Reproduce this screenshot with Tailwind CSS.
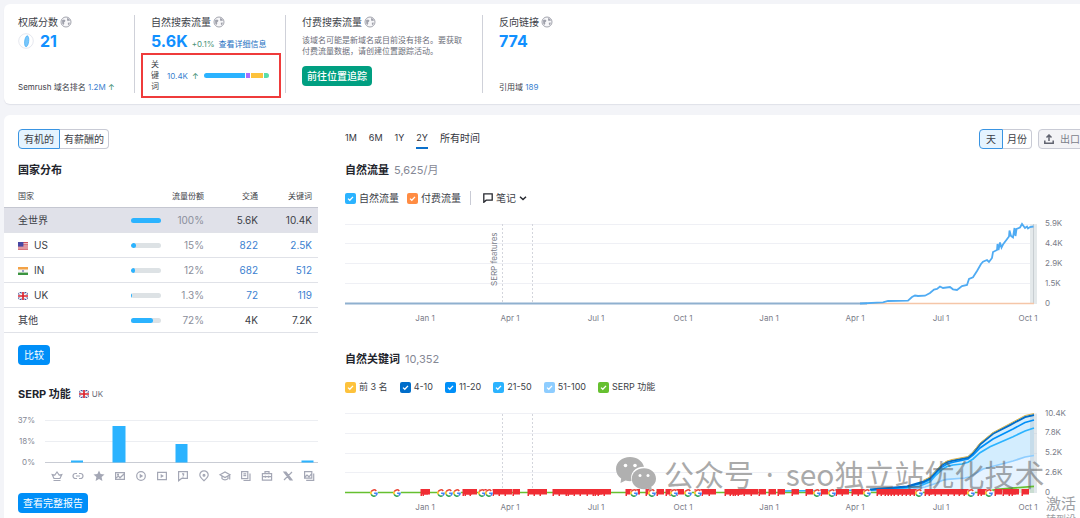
<!DOCTYPE html>
<html lang="zh-CN">
<head>
<meta charset="utf-8">
<title>Semrush 域名概览</title>
<script src="https://cdn.jsdelivr.net/npm/@tailwindcss/browser@4"></script>
</head>
<body class="relative min-h-screen overflow-hidden bg-[#f3f4f8] pt-1 pl-1 font-['Inter','Noto_Sans_CJK_SC',sans-serif] text-[10px] text-[#3c3e47]">

<svg class="hidden">
  <symbol id="globe" viewBox="0 0 12 12"><circle cx="6" cy="6" r="5" fill="#f7f7f9" stroke="#a3a5ae" stroke-width="1"/><path d="M2 4.200 4 3.400l1.400.8-.3 1.200L4 6.400 4.300 7.600 3.500 9 2.300 7.800zM7 2 9.200 3l.9 2-1.200-.4L8 5.200l-.9-.9zM7.800 6.800l2-.4-.5 2.200-1.300.5z" fill="#9fa1ab"/></symbol>
  <symbol id="check" viewBox="0 0 11 11"><path d="M3 5.600 4.800 7.300 8 3.900" fill="none" stroke="#fff" stroke-width="1.300"/></symbol>
  <symbol id="us" viewBox="0 0 10 8"><path fill="#f3dfe2" d="M0 0h10v8H0z"/><path d="M0 .6h10M0 2.800h10M0 5h10M0 7.200h10" stroke="#d0515c" stroke-width="1.200"/><path fill="#4747a3" d="M0 0h5.400v4.600H0z"/></symbol>
  <symbol id="in" viewBox="0 0 10 8"><path fill="#f5f5f3" d="M0 0h10v8H0z"/><path fill="#f3a246" d="M0 0h10v2.500H0z"/><path fill="#3a9440" d="M0 5.600h10V8H0z"/><circle cx="5" cy="4" r="1" fill="#8184bd"/></symbol>
  <symbol id="uk" viewBox="0 0 10 8"><path fill="#3b4596" d="M0 0h10v8H0z"/><path d="M0 0 10 8M10 0 0 8" stroke="#eee" stroke-width="1.500"/><path d="M5 0v8M0 4h10" stroke="#fff" stroke-width="3"/><path d="M5 0v8M0 4h10" stroke="#d9232e" stroke-width="1.700"/></symbol>
  <symbol id="goog" viewBox="0 0 8 8"><circle cx="4" cy="4" r="4" fill="#fff"/><g fill="none" stroke-width="1.500"><path d="M1.200 2.600A3.100 3.100 0 0 1 6.300 1.900" stroke="#ea4335"/><path d="M1.200 2.600A3.100 3.100 0 0 0 1.200 5.400" stroke="#fbbc05"/><path d="M1.200 5.400A3.100 3.100 0 0 0 5.600 6.700" stroke="#34a853"/><path d="M5.600 6.700A3.100 3.100 0 0 0 7.100 4.200H4.100" stroke="#4285f4"/></g></symbol>
  <symbol id="flag" viewBox="0 0 9 9"><path d="M.5 1h7.500v5.500H2v1.500H.5z" fill="#f02d34"/></symbol>
</svg>

<header class="flex rounded-l-md bg-white py-[11px] pl-[14px] shadow-[0_1px_1px_#dfe1e8]">
  <section class="flex h-[78px] w-[117px] shrink-0 flex-col border-r border-[#cfd1d9]">
    <h2 class="flex items-center gap-[2px] leading-[14px]">权威分数 <svg class="size-3"><use href="#globe"/></svg></h2>
    <p class="flex items-center gap-[6px] text-base leading-6 font-bold text-[#1190ff]"><svg class="size-4" viewBox="0 0 16 16"><circle cx="8" cy="8" r="7.300" fill="#fff" stroke="#e6e8ef"/><ellipse cx="8.700" cy="8.200" rx="2" ry="5.500" transform="rotate(7 8 8)" fill="#79c7fb" stroke="#46aff5" stroke-width=".7"/></svg>21</p>
    <p class="mt-auto text-[8px] leading-3">Semrush 域名排名 <a href="#" class="text-[#3b7fd0]">1.2M</a> <span class="text-[#3d8d70]">↑</span></p>
  </section>
  <section class="flex h-[78px] w-[151px] shrink-0 flex-col border-r border-[#cfd1d9] pl-4">
    <h2 class="flex items-center gap-[2px] leading-[14px]">自然搜索流量 <svg class="size-3"><use href="#globe"/></svg></h2>
    <p class="flex items-baseline gap-1 text-[8px]"><b class="text-base leading-6 text-[#1190ff]">5.6K</b><span class="text-[#4b9478]">+0.1%</span><a href="#" class="text-[#1b6fc2]">查看详细信息</a></p>
    <div class="-ml-[10px] flex h-[45px] w-[140px] shrink-0 items-center border-2 border-[#ef3b3b] pl-2 text-[8px]">
      <span class="w-4 pr-2 leading-[11px]">关键词</span>
      <a href="#" class="text-[#3b7fd0]">10.4K</a><span class="ml-1 text-[#3d8d70]">↑</span>
      <span class="ml-[5px] flex h-[5px] w-[65px] gap-px overflow-hidden rounded-full"><i class="flex-1 bg-[#2bb3ff]"></i><i class="w-1 bg-[#ab6cfe]"></i><i class="w-3 bg-[#fdc23c]"></i><i class="w-[5px] bg-[#59ddaa]"></i></span>
    </div>
  </section>
  <section class="h-[78px] w-[197px] shrink-0 border-r border-[#cfd1d9] pl-4">
    <h2 class="flex items-center gap-[2px] leading-[14px]">付费搜索流量 <svg class="size-3"><use href="#globe"/></svg></h2>
    <p class="mt-[6px] w-[166px] text-[8px] leading-[11px] text-[#6c6e79]">该域名可能是新域名或目前没有排名。要获取付费流量数据，请创建位置跟踪活动。</p>
    <button class="mt-[9px] h-5 rounded bg-[#009f81] px-[5px] text-[10px] leading-5 font-medium text-white">前往位置追踪</button>
  </section>
  <section class="flex h-[78px] flex-col pl-4">
    <h2 class="flex items-center gap-[2px] leading-[14px]">反向链接 <svg class="size-3"><use href="#globe"/></svg></h2>
    <p class="text-base leading-6 font-bold text-[#1190ff]">774</p>
    <p class="mt-auto text-[8px] leading-3">引用域 <a href="#" class="text-[#3b7fd0]">189</a></p>
  </section>
</header>

<main class="mt-[11px] flex rounded-tl-md bg-white pt-[14px]">
  <aside class="w-[314px] shrink-0">
    <div class="ml-[14px] flex h-5 leading-[18px]">
      <button class="rounded-l border border-[#3994e2] bg-[#e5f4ff] px-[5px]">有机的</button><button class="rounded-r border border-l-0 border-[#c9cbd5] px-1">有薪酬的</button>
    </div>
    <h2 class="mt-3 ml-[14px] text-[11px] leading-[18px] font-bold text-[#22242c]">国家分布</h2>
    <table class="mt-[6px] w-full table-fixed border-separate border-spacing-0 text-right text-[10px] [&_td]:border-b [&_td]:border-[#e0e2e8] [&_td]:p-0 [&_td:last-child]:pr-[6px] [&_td:first-child]:pl-[14px] [&_td:first-child]:text-left">
      <colgroup><col class="w-[127px]"><col class="w-[30px]"><col class="w-[43px]"><col class="w-[54px]"><col class="w-[60px]"></colgroup>
      <thead><tr class="h-[23px] text-[8px] [&_th]:border-b [&_th]:border-[#c5c7d1] [&_th]:p-0 [&_th]:font-normal"><th class="text-left"><span class="ml-[14px]">国家</span></th><th colspan="2">流量份额</th><th>交通</th><th><span class="mr-[6px]">关键词</span></th></tr></thead>
      <tbody>
        <tr class="h-[25px] bg-[#e0e1e9]"><td>全世界</td><td><div class="h-[5px] rounded-full bg-[#2bb3ff]"></div></td><td class="text-[#8a8e9b]">100%</td><td>5.6K</td><td>10.4K</td></tr>
        <tr class="h-[25px]"><td><svg class="mr-[6px] inline h-2 w-[10px]"><use href="#us"/></svg>US</td><td><div class="h-[5px] overflow-hidden rounded-full bg-[#dde2e5]"><div class="h-full rounded-full bg-[#2bb3ff]" style="width:15%"></div></div></td><td class="text-[#8a8e9b]">15%</td><td><a href="#" class="text-[#3b7fd0]">822</a></td><td><a href="#" class="text-[#3b7fd0]">2.5K</a></td></tr>
        <tr class="h-[25px] [&_td]:border-[#cdd2da]"><td><svg class="mr-[6px] inline h-2 w-[10px]"><use href="#in"/></svg>IN</td><td><div class="h-[5px] overflow-hidden rounded-full bg-[#dde2e5]"><div class="h-full rounded-full bg-[#2bb3ff]" style="width:12%"></div></div></td><td class="text-[#8a8e9b]">12%</td><td><a href="#" class="text-[#3b7fd0]">682</a></td><td><a href="#" class="text-[#3b7fd0]">512</a></td></tr>
        <tr class="h-[25px]"><td><svg class="mr-[6px] inline h-2 w-[10px]"><use href="#uk"/></svg>UK</td><td><div class="h-[5px] overflow-hidden rounded-full bg-[#dde2e5]"><div class="h-full bg-[#2bb3ff]" style="width:3%"></div></div></td><td class="text-[#8a8e9b]">1.3%</td><td><a href="#" class="text-[#3b7fd0]">72</a></td><td><a href="#" class="text-[#3b7fd0]">119</a></td></tr>
        <tr class="h-[25px]"><td>其他</td><td><div class="h-[5px] overflow-hidden rounded-full bg-[#dde2e5]"><div class="h-full rounded-r-full bg-[#2bb3ff]" style="width:72%"></div></div></td><td class="text-[#8a8e9b]">72%</td><td>4K</td><td>7.2K</td></tr>
      </tbody>
    </table>
    <div class="pl-[14px]">
      <button class="mt-3 block h-5 rounded bg-[#008ff8] px-[6px] leading-5 text-white">比较</button>
      <h2 class="mt-5 flex items-center gap-2 text-[11px] leading-[18px] font-bold text-[#22242c]">SERP 功能 <span class="flex items-center gap-[3px] text-[8px] font-normal text-[#6c6e79]"><svg class="h-2 w-[10px]"><use href="#uk"/></svg>UK</span></h2>
      <svg class="mt-2 block w-full" viewBox="18 411 300 74">
        <path d="M45 420.500H318M45 441.500H318" stroke="#eceef2"/><path d="M45 462.500H318" stroke="#c9ccd4"/>
        <path d="M71 460.500h12v2H71zM112.500 426h13v36.500h-13zM175.500 444h12v18.500h-12zM301.500 460.500h12v2h-12z" fill="#2bb3ff"/>
        <g font-size="8" fill="#858895" text-anchor="end"><text x="35" y="423">37%</text><text x="35" y="444">18%</text><text x="35" y="465">0%</text></g>
        <g fill="none" stroke="#a4a7b5" stroke-width="1.200">
          <g transform="translate(57 476)"><path d="M-3 2.500-4.800-1.500-2.200-1 0-4 2.200-1l2.600-.5L3 2.500zM-3.500 4.500h7"/></g>
          <g transform="translate(78 476)"><path d="M-1-2.500h-1.500a2.500 2.500 0 0 0 0 5H-1M1-2.500h1.500a2.500 2.500 0 0 1 0 5H1M-2 0h4"/></g>
          <g transform="translate(99 476)"><path fill="#a4a7b5" stroke="none" d="m0-5.500 1.600 3.600 3.900.4-2.900 2.600.8 3.900L0 3l-3.400 2 .8-3.900-2.900-2.600 3.900-.4z"/></g>
          <g transform="translate(120 476)"><path d="M-4.400-3.400h8.800v6.800h-8.800zM-4 2l2.500-2L0 1.800 4-2"/><circle cx="-2" cy="-1.300" r=".5"/></g>
          <g transform="translate(141 476)"><circle r="4.300"/><path fill="#a4a7b5" stroke="none" d="m-1.300-2.200 3.500 2.200-3.500 2.200z"/></g>
          <g transform="translate(162 476)"><path d="M-4.400-3.600h8.800v7.200h-8.800z"/><path fill="#a4a7b5" stroke="none" d="m-1.300-2 3.200 2-3.200 2z"/></g>
          <g transform="translate(183 476)"><path d="M-4.400-4.400h8.800v6.800h-5.800l-3 2.300zM-1-2.200h1.600v1.200L0-.3M0 .5v1"/></g>
          <g transform="translate(204 476)"><path d="M0 4.800C-2.500 2.500-4.200.8-4.200-1a4.200 4.200 0 0 1 8.400 0C4.200.8 2.500 2.500 0 4.800z"/><circle cy="-.8" r=".9" fill="#a4a7b5"/></g>
          <g transform="translate(225 476)"><path d="M-5-1.200 0-4l5 2.800L0 1.600zM-3 0v2.700C-1.500 4.300 1.500 4.300 3 2.700V0M4.700-1v4.500"/></g>
          <g transform="translate(246 476)"><path d="M-4.400-4.400h6.200v7h-6.200zM4-2.500v7h-6.500M-2.600-2.200H.2M-2.600-.3H.2"/></g>
          <g transform="translate(267 476)"><path d="M-4.600-2.300h9.200v6.400h-9.200zM-2-2.400v-2h4v2M-4.600.7h9.200M-1.600-.3v2M1.600-.3v2"/></g>
          <g transform="translate(288 476)"><path d="M-4-4h2L4 4H2zM4-4-4 4M-3-4l6 8"/></g>
          <g transform="translate(309 476)"><path d="M-4.400-4.400h7.200v6.600h-7.200zM4.700-2.500v6.800h-7.500M-4 1l2-2L0 .8l2.500-3"/></g>
        </g>
      </svg>
      <button class="mt-2 block h-5 rounded bg-[#008ff8] px-[5px] leading-5 text-white">查看完整报告</button>
    </div>
  </aside>

  <div class="ml-[27px] min-w-0 flex-1">
    <div class="flex h-5 items-start">
      <nav class="flex gap-3 text-[9px] leading-[18px] text-[#33353d]"><a href="#">1M</a><a href="#">6M</a><a href="#">1Y</a><a href="#" class="border-b-2 border-[#0b70cb]">2Y</a><a href="#" class="text-[10px]">所有时间</a></nav>
      <div class="-mr-[6px] ml-auto flex h-5 leading-[18px]">
        <button class="rounded-l border border-[#3994e2] bg-[#e5f4ff] px-[6px]">天</button><button class="rounded-r border border-l-0 border-[#c9cbd5] px-1">月份</button>
        <button class="ml-[6px] flex items-center gap-[6px] rounded border border-[#c9cbd5] bg-[#f3f3f6] px-[5px] text-[#7b7e8a]"><svg class="size-[10px]" viewBox="0 0 10 10" fill="none" stroke="#60636f" stroke-width="1.500"><path d="M.8 6.500v2.800h8.400V6.500M5 7V1M2.500 3.500 5 1l2.500 2.500"/></svg>出口</button>
      </div>
    </div>
    <h2 class="mt-3 flex gap-[5px] text-[11px] leading-[18px] font-bold text-[#22242c]">自然流量 <span class="font-normal text-[#858895]">5,625/月</span></h2>
    <div class="mt-[10px] flex h-[18px] items-center">
      <label class="flex items-center gap-[3px]"><span class="grid"><input type="checkbox" checked class="size-[11px] appearance-none rounded-xs bg-[#2bb3ff] [grid-area:1/1]"><svg class="pointer-events-none size-[11px] [grid-area:1/1]"><use href="#check"/></svg></span>自然流量</label>
      <label class="ml-2 flex items-center gap-[3px]"><span class="grid"><input type="checkbox" checked class="size-[11px] appearance-none rounded-xs bg-[#ff8c43] [grid-area:1/1]"><svg class="pointer-events-none size-[11px] [grid-area:1/1]"><use href="#check"/></svg></span>付费流量</label>
      <span class="ml-[9px] h-[14px] w-px bg-[#c9cbd5]"></span>
      <button class="ml-3 flex items-center gap-[3px]"><svg class="size-[10px]" viewBox="0 0 10 10" fill="none" stroke="#26282f" stroke-width="1.300"><path d="M.8.8h8.400v6.400H3.200L.8 9.300z"/></svg>笔记<svg class="size-2" viewBox="0 0 8 8" fill="none" stroke="#26282f" stroke-width="1.500"><path d="m1 2.800 3 2.700 3-2.700"/></svg></button>
    </div>
    <svg class="mt-2 block w-full" viewBox="345 215 735 110">
      <path d="M345 224.500H1037M345 243.500H1037M345 263.500H1037M345 283.500H1037" stroke="#eff0f5"/>
      <path d="M502.500 224v79M532.500 224v79" stroke="#d3d5dc" stroke-dasharray="2 2"/>
      <path d="M1030 224h7v80h-7z" fill="#e4e9eb"/><path d="M1033.500 224v80" stroke="#c8ced2"/>
      <path d="M345 303.500H867" stroke="#8fb0cf" stroke-width="2"/><path d="M860 303.500H1034" stroke="#f5c6a8" stroke-width="1.400"/>
      <path d="M860 303.500 883 302.300 888 301 908 300.700 912 297 915 295.500 918 296 925 295.700 930 293 934 289.500 937 289 940 286.500 943 288 950 287 953 289.300 957 290 962 286 967 285 969 279 973 277.300 977 271 981 264 983 261.700 987 260 989 262 992 258 993 252 997 250 997.500 244 998.500 250 1000 242.500 1001.500 247.500 1003 244.500 1009 236.500 1009.500 230.500 1011 236 1013 237.500 1014.500 228 1015.500 236 1016.500 229 1020 227.500 1022 224 1025 228 1027 226.500 1028 228.500 1030 227 1033.500 226.500" fill="none" stroke="#4fabf3" stroke-width="1.800"/>
      <g font-size="8" fill="#7a7d89"><text x="1045" y="226">5.9K</text><text x="1045" y="246">4.4K</text><text x="1045" y="266">2.9K</text><text x="1045" y="286">1.5K</text><text x="1045" y="306">0</text>
      <text transform="translate(497 286) rotate(-90)">SERP features</text>
      <g text-anchor="middle"><text x="425" y="321">Jan 1</text><text x="510" y="321">Apr 1</text><text x="596" y="321">Jul 1</text><text x="683" y="321">Oct 1</text><text x="769" y="321">Jan 1</text><text x="855" y="321">Apr 1</text><text x="941" y="321">Jul 1</text><text x="1028" y="321">Oct 1</text></g></g>
    </svg>
    <h2 class="mt-[25px] flex gap-[5px] text-[11px] leading-[18px] font-bold text-[#22242c]">自然关键词 <span class="font-normal text-[#858895]">10,352</span></h2>
    <div class="mt-[10px] flex h-[18px] items-center gap-3 text-[9px]">
      <label class="flex items-center gap-[3px]"><span class="grid"><input type="checkbox" checked class="size-[11px] appearance-none rounded-xs bg-[#fdc23c] [grid-area:1/1]"><svg class="pointer-events-none size-[11px] [grid-area:1/1]"><use href="#check"/></svg></span>前 3 名</label>
      <label class="flex items-center gap-[3px]"><span class="grid"><input type="checkbox" checked class="size-[11px] appearance-none rounded-xs bg-[#006dca] [grid-area:1/1]"><svg class="pointer-events-none size-[11px] [grid-area:1/1]"><use href="#check"/></svg></span>4-10</label>
      <label class="flex items-center gap-[3px]"><span class="grid"><input type="checkbox" checked class="size-[11px] appearance-none rounded-xs bg-[#008ff8] [grid-area:1/1]"><svg class="pointer-events-none size-[11px] [grid-area:1/1]"><use href="#check"/></svg></span>11-20</label>
      <label class="flex items-center gap-[3px]"><span class="grid"><input type="checkbox" checked class="size-[11px] appearance-none rounded-xs bg-[#2bb3ff] [grid-area:1/1]"><svg class="pointer-events-none size-[11px] [grid-area:1/1]"><use href="#check"/></svg></span>21-50</label>
      <label class="flex items-center gap-[3px]"><span class="grid"><input type="checkbox" checked class="size-[11px] appearance-none rounded-xs bg-[#8ecdff] [grid-area:1/1]"><svg class="pointer-events-none size-[11px] [grid-area:1/1]"><use href="#check"/></svg></span>51-100</label>
      <label class="flex items-center gap-[3px]"><span class="grid"><input type="checkbox" checked class="size-[11px] appearance-none rounded-xs bg-[#66c030] [grid-area:1/1]"><svg class="pointer-events-none size-[11px] [grid-area:1/1]"><use href="#check"/></svg></span>SERP 功能</label>
    </div>
    <svg class="mt-2 block w-full" viewBox="345 404 735 114">
      <path d="M345 413.500H1037M345 433.500H1037M345 453.500H1037M345 472.500H1037" stroke="#eff0f5"/>
      <path d="M502.500 414v78M532.500 414v78" stroke="#d3d5dc" stroke-dasharray="2 2"/>
      <path d="M780 491.500 870 489 907 486 923 481 930 477.500 936 471 942 464.500 947 461.500 952 460 968 456.500 973 452 980 443.500 993 432.700 1010 424 1025 415.700 1034 413.500V493H780z" fill="#d3edfe"/>
      <path d="M860 492 913 489 937 483 947 479.300 970 476.700 983 469 1013 461 1034 455.700V493H860z" fill="#e6f3ff"/>
      <path d="M980 492 997 489.300 1034 486.300V493z" fill="#d9efd5"/>
      <path d="M1030 414h7v79h-7z" fill="#b4c4cc" fill-opacity=".4"/>
      <g fill="none" stroke-width="1.700">
        <path d="M860 491 913 489 925 487 937 483 942 480.500 947 479.300 965 478 970 476.700 983 469 1013 461 1025 457 1034 455.500" stroke="#8ecdff"/>
        <path d="M345 492.500H980L997 489.300 1034 486.300" stroke="#66c030"/>
        <path d="M780 491 870 490 907 488 920 486 930 481.700 936 475 942 469.500 947 466.500 953 465 962 464 968 462.300 973 459 980 452.700 990 446.700 1013 436.700 1025 431 1034 428" stroke="#2bb3ff"/>
        <path d="M870 490 907 487 923 483 930 479.500 936 473 942 467 947 464 952 462.500 968 459 973 455 980 448 993 439 1013 429 1025 422.500 1034 420" stroke="#008ff8"/>
        <path d="M870 489.500 907 486.500 923 481.700 930 478.200 936 471.500 942 465 947 462 952 460.700 968 457.500 973 453 980 444.500 993 433.700 1010 425 1025 417 1034 415" stroke="#006dca" stroke-width="2"/>
        <path d="M923 480.500 930 477 936 470.500 942 464 947 461 952 459.500 968 456.500 973 452 980 443 993 432.500 1010 423.500 1025 415.500 1034 413.500" stroke="#d8b452" stroke-width="1"/>
      </g>
      <g id="marks"></g>
      <g font-size="8" fill="#7a7d89"><text x="1045" y="416">10.4K</text><text x="1045" y="435">7.8K</text><text x="1045" y="455">5.2K</text><text x="1045" y="475">2.6K</text><text x="1045" y="495">0</text>
      <g text-anchor="middle"><text x="425" y="510">Jan 1</text><text x="510" y="510">Apr 1</text><text x="596" y="510">Jul 1</text><text x="683" y="510">Oct 1</text><text x="769" y="510">Jan 1</text><text x="855" y="510">Apr 1</text><text x="941" y="510">Jul 1</text><text x="1028" y="510">Oct 1</text></g></g>
    </svg>
  </div>
</main>

<div class="pointer-events-none absolute top-[452px] left-[616px] flex items-center gap-2 font-['Noto_Sans_CJK_SC',sans-serif] text-[30px] leading-[42px] whitespace-nowrap text-[#555]/50">
  <svg class="h-[34px] w-10" viewBox="0 0 40 34"><path d="M14 0C6 0 0 5.200 0 12c0 4 2 7.300 5.200 9.600L4.500 26l5-2.500c2 .5 4 .8 6 .6C13.500 15.500 20 9.500 28 9.800 26.500 4 21 0 14 0z" fill="#b0b0b0"/><path d="M28 11.200c-7 0-12.200 4.600-12.200 10.500S21 32.200 28 32.200c1.500 0 2.800-.2 4-.5L36 34l-.7-4.200c2.900-2 4.700-4.800 4.700-8.100 0-5.900-5.200-10.500-12-10.500z" fill="#b0b0b0"/><g fill="#fff"><circle cx="9.500" cy="8.500" r="1.800"/><circle cx="19" cy="8.500" r="1.800"/><circle cx="24" cy="18.500" r="1.500"/><circle cx="32" cy="18.500" r="1.500"/></g></svg>
  <span>公众号<span class="px-1 font-['Noto_Sans',sans-serif]"> · </span>seo独立站优化技术</span>
</div>
<div class="pointer-events-none absolute top-[493px] left-[1046px] h-[25px] overflow-hidden font-['Noto_Sans_CJK_SC',sans-serif] text-[15px] leading-[19px] whitespace-nowrap text-[#9c9ea3]">激活<p class="text-[10px] leading-[14px]">转到设</p></div>

<script>
  const flags = [420,422,462,464,469,479,492,498,504,512,527,533,539,552,558,565,567,573,579,586,592,594,597,603,625,632,645,656,665,669,676,694,701,708,724,729,732,734,737,743,750,758,768,777,791,805,820,835,841,851,857,876,880,884,887,890,893,897,901,905,909,913,924,928,934,940,947,953,958,963,977,980,994,1002,1008,1011,1021];
  const updates = [374,397,441,449,457,482,489,634,652,674,688,698,817,832,867,919,971,989];
  const use = (id, x, y, s) => `<use href="#${id}" x="${x}" y="${y}" width="${s}" height="${s}"/>`;
  document.getElementById('marks').innerHTML =
    flags.map(x => use('flag', x, 488, 9)).join('') + updates.map(x => use('goog', x - 4, 489, 8)).join('');
</script>
</body>
</html>
